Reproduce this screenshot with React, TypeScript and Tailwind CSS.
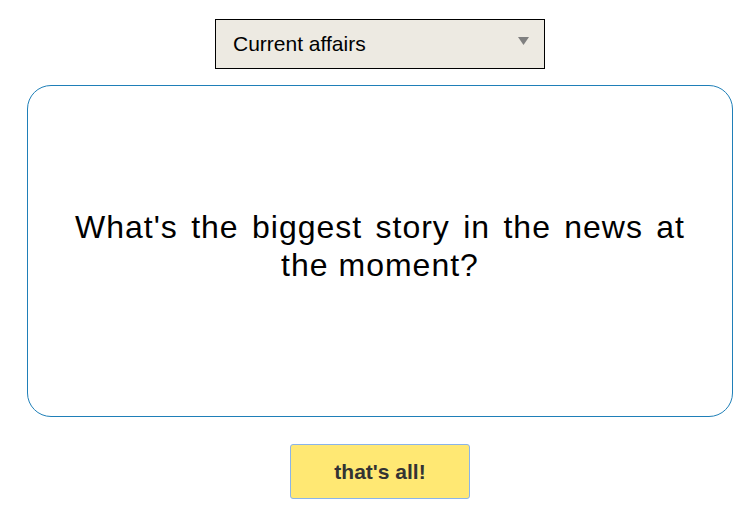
export default function App() {
  return (
    <div className="w-[752px] h-[520px] bg-white flex flex-col items-center pl-[8px] font-['Liberation_Sans',Arial,sans-serif]">
      <div className="mt-[19px] w-[330px] h-[50px] border border-black bg-[#edeae2] flex items-center justify-between pl-[17px] pr-[15px]">
        <span className="text-[21px] text-black">Current affairs</span>
        <svg width="11" height="8" viewBox="0 0 11 8" className="mb-[6px]">
          <polygon points="0,0 11,0 5.5,8" fill="#808080" />
        </svg>
      </div>
      <div className="mt-[16px] w-[706px] h-[332px] border border-[#1f7fb8] rounded-[24px] flex items-center justify-center px-[47px]">
        <p className="w-full mb-[10px] text-[32px] leading-[38px] tracking-[1px] text-black text-justify [text-align-last:center]">
          What's the biggest story in the news at the moment?
        </p>
      </div>
      <button className="mt-[27px] w-[180px] h-[55px] border border-[#8ab4ea] bg-[#ffe873] rounded-[3px] text-[21px] font-bold text-[#333333]">
        that's all!
      </button>
    </div>
  );
}
